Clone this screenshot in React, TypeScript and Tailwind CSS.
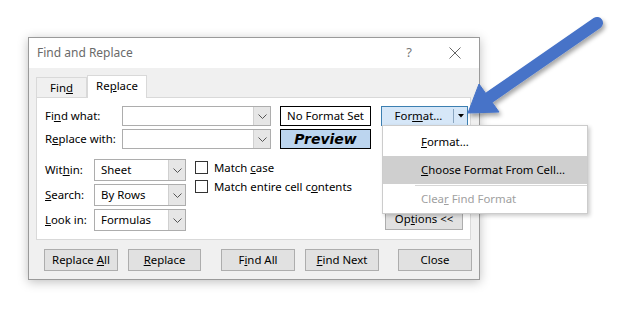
import React from 'react';

const Chevron = () => (
  <svg width="9" height="5" viewBox="0 0 9 5" fill="none">
    <path d="M0.5 0.5 L4.5 4.5 L8.5 0.5" stroke="#555" strokeWidth="1" />
  </svg>
);

const ComboInput = ({ value = '', h = 'h-[20px]', w = 'w-[149px]' }: { value?: string; h?: string; w?: string }) => (
  <div className={`${w} ${h} shrink-0 border border-[#adadad] bg-white flex`}>
    <div className="flex-1 pl-[6px] flex items-center leading-none">{value}</div>
    <div className="w-[17px] bg-[#e6e6e6] border-l border-[#d0d0d0] flex items-center justify-center">
      <Chevron />
    </div>
  </div>
);

const Btn = ({ children, w = 'w-[74px]', className = '' }: { children: React.ReactNode; w?: string; className?: string }) => (
  <button className={`${w} h-[22px] shrink-0 bg-[#e1e1e1] border border-[#adadad] text-black leading-none ${className}`}>
    {children}
  </button>
);

const CheckRow = ({ children }: { children: React.ReactNode }) => (
  <div className="flex items-center h-[13px]">
    <div className="w-[13px] h-[13px] border border-[#333] bg-white" />
    <span className="ml-[6px] leading-none">{children}</span>
  </div>
);

const Label = ({ w, children }: { w: string; children: React.ReactNode }) => (
  <div className={`${w} shrink-0 whitespace-nowrap`}>
    <span>{children}</span>
  </div>
);

const App = () => {
  return (
    <div className="relative w-[620px] h-[310px] bg-white overflow-hidden font-['Noto_Sans',sans-serif] text-[11.4px] text-black">
      <div className="pt-[37px] pl-[28px]">
        {/* Dialog */}
        <div className="w-[452px] h-[243px] border border-[#9a9a9a] shadow-[0_2px_10px_rgba(0,0,0,0.25)] flex flex-col">
          {/* Title bar */}
          <div className="h-[30px] bg-white flex items-center pl-[8px] text-[#6a6a6a]">
            <span className="text-[12px]">Find and Replace</span>
            <span className="ml-auto mr-[37px] text-[13px] text-[#777]">?</span>
            <svg className="mr-[18px]" width="12" height="12" viewBox="0 0 12 12">
              <path d="M0.5 0.5 L11.5 11.5 M11.5 0.5 L0.5 11.5" stroke="#666" strokeWidth="1" />
            </svg>
          </div>

          {/* Body */}
          <div className="flex-1 bg-[#f0f0f0] flex flex-col">
            {/* Tabs */}
            <div className="h-[29px] pl-[7px] flex items-end">
              <div className="w-[51px] h-[20px] border border-b-0 border-[#d9d9d9] bg-[#f0f0f0] flex items-center justify-center">
                <span>Fin<u>d</u></span>
              </div>
              <div className="relative top-[1px] w-[60px] h-[23px] border border-b-0 border-[#d9d9d9] bg-white flex items-center justify-center pb-[2px]">
                <span>Re<u>p</u>lace</span>
              </div>
            </div>

            {/* Panel */}
            <div className="mx-[7px] w-[435px] h-[143px] bg-white border border-[#d9d9d9] pl-[8px] pt-[8px] pr-[7px]">
              <div className="flex items-center">
                <Label w="w-[77px]">Fi<u>n</u>d what:</Label>
                <ComboInput />
                <div className="ml-[9px] w-[91px] h-[20px] shrink-0 border border-black flex items-center justify-center">
                  <span>No Format Set</span>
                </div>
                <div className="ml-[10px] w-[87px] h-[20px] shrink-0 border border-[#3c7fb1] bg-[#d6e7f8] flex items-center">
                  <div className="flex-1 text-center pl-[2px]">
                    <span>For<u>m</u>at...</span>
                  </div>
                  <div className="w-[14px] h-[14px] border-l border-[#8aa6c1] flex items-center justify-center">
                    <svg width="6" height="4" viewBox="0 0 6 4"><path d="M0 0 L6 0 L3 3.5 Z" fill="#000" /></svg>
                  </div>
                </div>
              </div>
              <div className="flex items-center mt-[3px]">
                <Label w="w-[77px]">R<u>e</u>place with:</Label>
                <ComboInput />
                <div className="ml-[9px] w-[91px] h-[20px] shrink-0 border border-black bg-[#bcd5ef] flex items-center justify-center font-['DejaVu_Sans',sans-serif] font-bold italic text-[14px] leading-none">
                  Preview
                </div>
              </div>

              <div className="flex mt-[10px]">
                <div className="flex flex-col gap-[3px]">
                  <div className="flex items-center">
                    <Label w="w-[49px]">Wit<u>h</u>in:</Label>
                    <ComboInput value="Sheet" w="w-[92px]" h="h-[22px]" />
                  </div>
                  <div className="flex items-center">
                    <Label w="w-[49px]"><u>S</u>earch:</Label>
                    <ComboInput value="By Rows" w="w-[92px]" h="h-[22px]" />
                  </div>
                  <div className="flex items-center">
                    <Label w="w-[49px]"><u>L</u>ook in:</Label>
                    <ComboInput value="Formulas" w="w-[92px]" h="h-[22px]" />
                  </div>
                </div>
                <div className="ml-[9px] pt-[2px] flex flex-col gap-[6px]">
                  <CheckRow>Match <u>c</u>ase</CheckRow>
                  <CheckRow>Match entire cell c<u>o</u>ntents</CheckRow>
                </div>
                <div className="ml-auto self-end mb-[1px]">
                  <Btn w="w-[78px]" className="h-[21px]">Op<u>t</u>ions &lt;&lt;</Btn>
                </div>
              </div>
            </div>

            {/* Bottom buttons */}
            <div className="flex mt-[9px] pl-[15px]">
              <Btn>Replace <u>A</u>ll</Btn>
              <Btn w="w-[73px]" className="ml-[10px]"><u>R</u>eplace</Btn>
              <Btn className="ml-[20px]">F<u>i</u>nd All</Btn>
              <Btn className="ml-[10px]"><u>F</u>ind Next</Btn>
              <Btn className="ml-[19px]">Close</Btn>
            </div>
          </div>
        </div>
      </div>

      {/* Format dropdown menu */}
      <div className="absolute left-[382px] top-[125px] w-[206px] bg-white border border-[#cccccc] shadow-[2px_2px_4px_rgba(0,0,0,0.2)] pt-[1px] pb-[1px]">
        <div className="h-[29px] flex items-center pl-[38px]"><span><u>F</u>ormat...</span></div>
        <div className="h-[28px] flex items-center pl-[38px] bg-[#cfcfcf]"><span><u>C</u>hoose Format From Cell...</span></div>
        <div className="ml-[32px] h-[1px] bg-[#d7d7d7] my-[1px]" />
        <div className="h-[25px] flex items-center pl-[38px] pb-[2px] text-[#a0a0a0]"><span>Clea<u>r</u> Find Format</span></div>
      </div>

      {/* Arrow */}
      <svg className="absolute left-0 top-0 pointer-events-none" width="620" height="310" viewBox="0 0 620 310">
        <defs>
          <filter id="sh" x="-20%" y="-20%" width="140%" height="140%">
            <feDropShadow dx="2" dy="3" stdDeviation="2" floodColor="#000" floodOpacity="0.35" />
          </filter>
        </defs>
        <g filter="url(#sh)" fill="#4673c8" stroke="#4673c8">
          <line x1="597" y1="23" x2="490" y2="97" strokeWidth="12" strokeLinecap="round" />
          <polygon points="468,113 479,84 499,112" strokeWidth="1" strokeLinejoin="round" />
        </g>
      </svg>
    </div>
  );
};

export default App;
